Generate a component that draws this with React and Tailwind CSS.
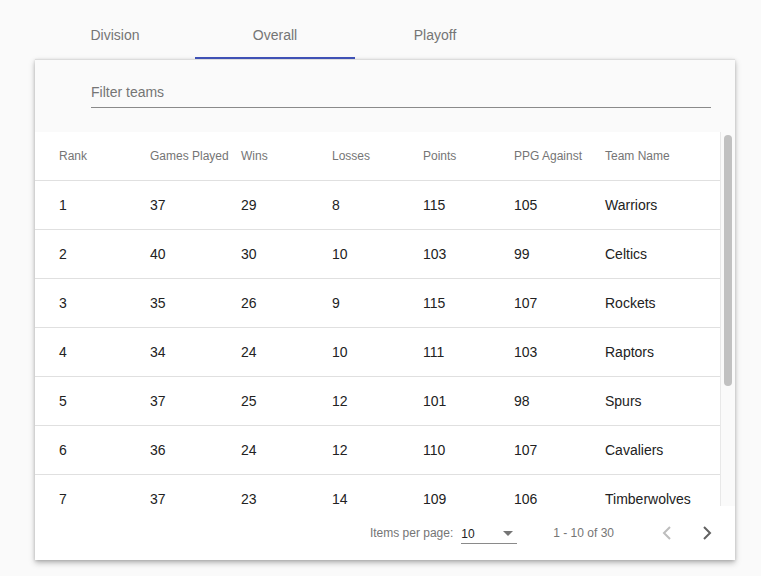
import React, { useState } from "react";

const teams = [
  { rank: 1, played: 37, wins: 29, losses: 8, points: 115, ppg: 105, name: "Warriors" },
  { rank: 2, played: 40, wins: 30, losses: 10, points: 103, ppg: 99, name: "Celtics" },
  { rank: 3, played: 35, wins: 26, losses: 9, points: 115, ppg: 107, name: "Rockets" },
  { rank: 4, played: 34, wins: 24, losses: 10, points: 111, ppg: 103, name: "Raptors" },
  { rank: 5, played: 37, wins: 25, losses: 12, points: 101, ppg: 98, name: "Spurs" },
  { rank: 6, played: 36, wins: 24, losses: 12, points: 110, ppg: 107, name: "Cavaliers" },
  { rank: 7, played: 37, wins: 23, losses: 14, points: 109, ppg: 106, name: "Timberwolves" },
];

const columns = ["Rank", "Games Played", "Wins", "Losses", "Points", "PPG Against", "Team Name"];

export default function App() {
  const [tab, setTab] = useState("Overall");
  const [filter, setFilter] = useState("");

  return (
    <div className="w-[761px] h-[576px] bg-[#fafafa] overflow-hidden font-['Liberation_Sans',Arial,sans-serif]">
      <div className="flex pl-[35px] h-[59px]">
        {["Division", "Overall", "Playoff"].map((t) => (
          <button
            key={t}
            onClick={() => setTab(t)}
            className={`w-[160px] h-full flex items-center justify-center pt-[14px] text-[14px] text-[#757575] border-b-2 ${
              tab === t ? "border-[#3f51b5]" : "border-transparent"
            }`}
          >
            {t}
          </button>
        ))}
      </div>

      <div className="mx-[35px] w-[700px] h-[501px] flex flex-col border-t border-[#dcdcdc] bg-white shadow-[0_3px_6px_rgba(0,0,0,0.25),0_1px_3px_rgba(0,0,0,0.15)]">
        <div className="h-[72px] bg-[#fafafa] px-[56px] pt-[20px] shrink-0">
          <input
            value={filter}
            onChange={(e) => setFilter(e.target.value)}
            placeholder="Filter teams"
            className="w-[620px] h-[27px] pb-[3px] bg-transparent border-b border-[#8a8a8a] outline-none text-[14px] text-[#333] placeholder-[#757575]"
          />
        </div>

        <div className="flex h-[374px] shrink-0 overflow-hidden">
          <div className="w-[685px] overflow-hidden">
            <div className="flex h-[49px] items-center border-b border-[#e0e0e0] pl-[24px]">
              {columns.map((c) => (
                <div key={c} className="w-[91px] shrink-0 text-[12px] text-[#757575] whitespace-nowrap">
                  {c}
                </div>
              ))}
            </div>
            {teams
              .filter((t) => t.name.toLowerCase().includes(filter.toLowerCase()))
              .map((t) => (
                <div key={t.rank} className="flex h-[49px] items-center border-b border-[#e0e0e0] pl-[24px] text-[14px] text-[#222]">
                  <div className="w-[91px] shrink-0">{t.rank}</div>
                  <div className="w-[91px] shrink-0">{t.played}</div>
                  <div className="w-[91px] shrink-0">{t.wins}</div>
                  <div className="w-[91px] shrink-0">{t.losses}</div>
                  <div className="w-[91px] shrink-0">{t.points}</div>
                  <div className="w-[91px] shrink-0">{t.ppg}</div>
                  <div className="w-[91px] shrink-0 whitespace-nowrap">{t.name}</div>
                </div>
              ))}
          </div>
          <div className="w-[15px] border-l border-[#e8e8e8] bg-[#fafafa] pt-[3px] flex justify-center">
            <div className="w-[8px] h-[251px] rounded-full bg-[#c1c1c1]" />
          </div>
        </div>

        <div className="flex-1 flex items-center justify-end text-[12px] text-[#757575]">
          <span>Items per page:</span>
          <div className="ml-[8px] w-[56px] h-[22px] flex items-center justify-between border-b border-[#8a8a8a] pt-[2px]">
            <span className="text-[#222]">10</span>
            <svg width="10" height="5" viewBox="0 0 10 5" className="mr-[4px]">
              <path d="M0 0 L5 5 L10 0 Z" fill="#757575" />
            </svg>
          </div>
          <span className="ml-[36px]">1 - 10 of 30</span>
          <button className="ml-[33px] w-[40px] h-[40px] flex items-center justify-center">
            <svg width="10" height="16" viewBox="0 0 10 16">
              <path d="M8 2 L2 8 L8 14" fill="none" stroke="#bdbdbd" strokeWidth="2" />
            </svg>
          </button>
          <button className="mr-[8px] w-[40px] h-[40px] flex items-center justify-center">
            <svg width="10" height="16" viewBox="0 0 10 16">
              <path d="M2 2 L8 8 L2 14" fill="none" stroke="#616161" strokeWidth="2" />
            </svg>
          </button>
        </div>
      </div>
    </div>
  );
}
